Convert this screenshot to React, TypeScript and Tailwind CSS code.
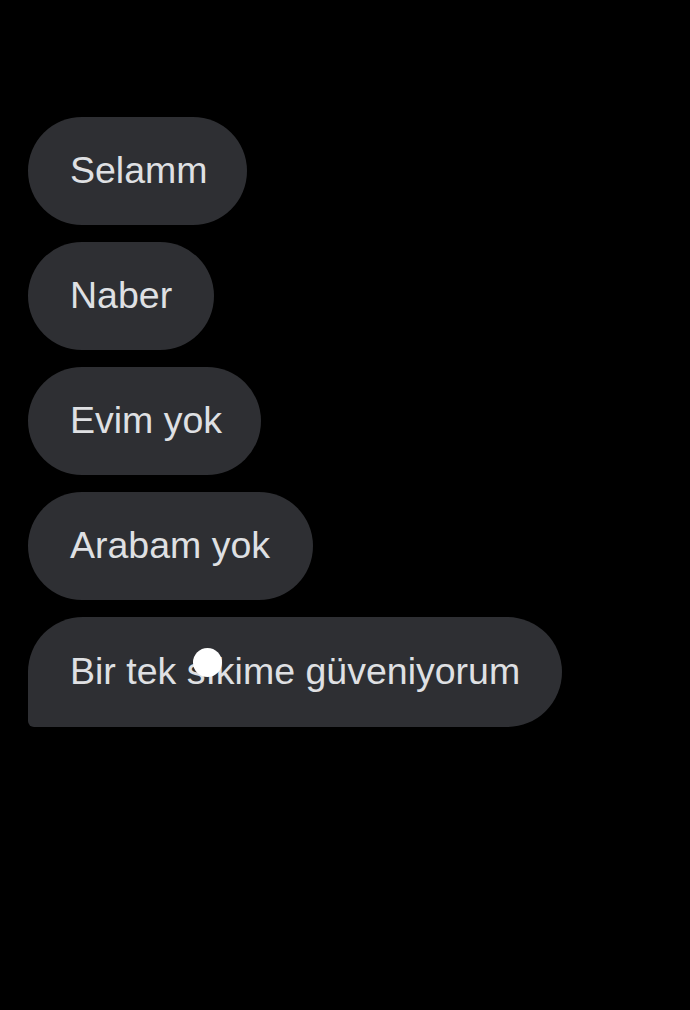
import React from "react";

const msgs = [
  { t: "Selamm", pr: "pr-[39px]" },
  { t: "Naber", pr: "pr-[42px]" },
  { t: "Evim yok", pr: "pr-[39px]" },
  { t: "Arabam yok", pr: "pr-[43px]" },
];

export default function App() {
  return (
    <div
      className="w-[690px] h-[1010px] bg-black overflow-hidden relative"
      style={{ fontFamily: '"Liberation Sans", Arial, sans-serif' }}
    >
      <div className="flex flex-col items-start gap-[17px] pt-[117px] pl-[28px]">
        {msgs.map((m) => (
          <div
            key={m.t}
            className={`h-[108px] flex items-center pl-[42px] ${m.pr} rounded-full bg-[#2e2f33] text-[#dfe0e3] text-[37.5px] leading-none`}
          >
            {m.t}
          </div>
        ))}
        <div className="relative h-[110px] flex items-center pl-[42px] pr-[42px] rounded-[55px] rounded-bl-[6px] bg-[#2e2f33] text-[#dfe0e3] text-[37.5px] leading-none">
          Bir tek sıkime güveniyorum
          <span className="absolute left-[165px] top-[31px] w-[29px] h-[29px] rounded-full bg-white" />
        </div>
      </div>
    </div>
  );
}
